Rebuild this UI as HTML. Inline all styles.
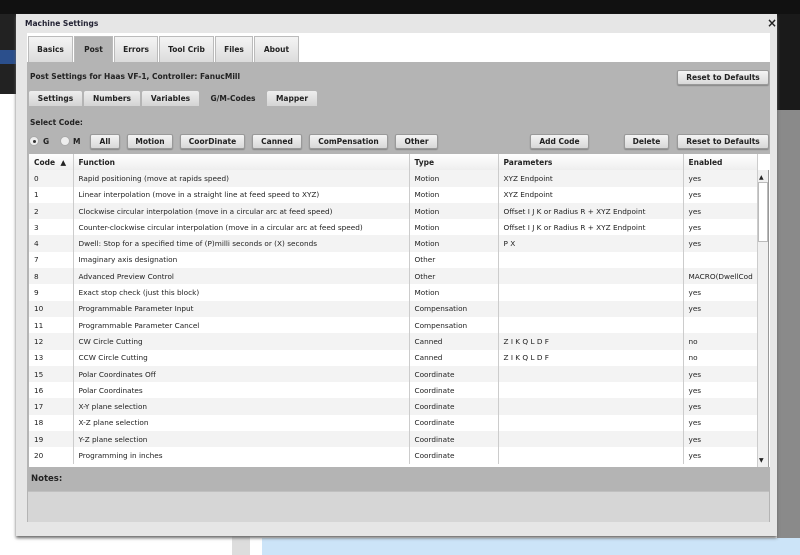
<!DOCTYPE html><html><head><style>
*{margin:0;padding:0;box-sizing:border-box}
body{width:800px;height:555px;overflow:hidden;position:relative;background:#fff;font-family:"DejaVu Sans","Liberation Sans",sans-serif;font-size:8px;color:#222}
.a{position:absolute}
.btn{position:absolute;height:15px;border:1px solid #999;border-radius:2px;background:linear-gradient(#f4f4f4,#d8d8d8);font-weight:bold;font-size:7.5px;text-align:center;line-height:13px;color:#222;box-shadow:0 1px 1px #888}
.tab{position:absolute;top:36px;height:26px;background:linear-gradient(#f4f4f4,#dcdcdc);border:1px solid #bbb;border-bottom:none;font-weight:bold;font-size:7.5px;text-align:center;line-height:26px}
.st{position:absolute;top:91px;height:15px;background:linear-gradient(#eee,#d4d4d4);font-weight:bold;font-size:7.5px;text-align:center;line-height:15px;border-radius:2px 2px 0 0}
table{border-collapse:collapse;width:728px;table-layout:fixed}
td{height:16.3px;font-size:7.3px;padding-left:5px;border-right:1px solid #ccc;white-space:nowrap;overflow:hidden}
tr:nth-child(even) td{background:#f3f3f3}
</style></head><body>
<div class="a" style="left:0;top:0;width:800px;height:14px;background:#111"></div>
<div class="a" style="left:0;top:14px;width:16px;height:80px;background:#222"></div>
<div class="a" style="left:0;top:50px;width:16px;height:14px;background:#2b4f8c"></div>
<div class="a" style="left:777px;top:14px;width:23px;height:96px;background:#1a1a1a"></div>
<div class="a" style="left:777px;top:110px;width:23px;height:430px;background:#8a8a8a"></div>
<div class="a" style="left:262px;top:538px;width:538px;height:17px;background:#cce4f8"></div>
<div class="a" style="left:232px;top:536px;width:18px;height:19px;background:#ddd"></div>
<div class="a" style="left:16px;top:14px;width:761px;height:522px;background:#e6e6e6;box-shadow:0 2px 3px #666"></div>
<div class="a" style="left:25px;top:19px;font-weight:bold;font-size:7.5px;color:#223">Machine Settings</div>
<div class="a" style="left:767px;top:16px;font-weight:bold;font-size:12px">×</div>
<div class="a" style="left:27px;top:33px;width:743px;height:29px;background:#fff"></div>
<div class="tab" style="left:28px;width:45px">Basics</div>
<div class="tab" style="left:74px;width:39px;background:#b4b4b4">Post</div>
<div class="tab" style="left:114px;width:44px">Errors</div>
<div class="tab" style="left:159px;width:55px">Tool Crib</div>
<div class="tab" style="left:215px;width:38px">Files</div>
<div class="tab" style="left:254px;width:45px">About</div>
<div class="a" style="left:27px;top:62px;width:743px;height:460px;background:#b4b4b4"></div>
<div class="a" style="left:30px;top:72px;font-weight:bold;font-size:7.5px">Post Settings for Haas VF-1, Controller: FanucMill</div>
<div class="btn" style="left:677px;top:70px;width:92px">Reset to Defaults</div>
<div class="st" style="left:29px;width:53px">Settings</div>
<div class="st" style="left:84px;width:56px">Numbers</div>
<div class="st" style="left:142px;width:57px">Variables</div>
<div class="st" style="left:201px;width:64px;background:#b4b4b4">G/M-Codes</div>
<div class="st" style="left:267px;width:50px">Mapper</div>
<div class="a" style="left:30px;top:118px;font-weight:bold;font-size:7.5px">Select Code:</div>
<div class="a" style="left:29px;top:136px;width:10px;height:10px;border-radius:50%;background:#eee;border:1px solid #aaa"></div>
<div class="a" style="left:32.5px;top:139.5px;width:3px;height:3px;border-radius:50%;background:#333"></div>
<div class="a" style="left:43px;top:137px;font-weight:bold;font-size:7.5px">G</div>
<div class="a" style="left:60px;top:136px;width:10px;height:10px;border-radius:50%;background:#eee;border:1px solid #aaa"></div>
<div class="a" style="left:73px;top:137px;font-weight:bold;font-size:7.5px">M</div>
<div class="btn" style="left:90px;top:134px;width:30px">All</div>
<div class="btn" style="left:127px;top:134px;width:46px">Motion</div>
<div class="btn" style="left:180px;top:134px;width:65px">CoorDinate</div>
<div class="btn" style="left:252px;top:134px;width:50px">Canned</div>
<div class="btn" style="left:309px;top:134px;width:79px">ComPensation</div>
<div class="btn" style="left:395px;top:134px;width:43px">Other</div>
<div class="btn" style="left:530px;top:134px;width:59px">Add Code</div>
<div class="btn" style="left:624px;top:134px;width:45px">Delete</div>
<div class="btn" style="left:677px;top:134px;width:92px">Reset to Defaults</div>
<div class="a" style="left:29px;top:154px;width:741px;height:313px;background:#fff;overflow:hidden">
<table><tr style="background:linear-gradient(#fff,#eee)"><td style="width:44px;font-weight:bold;font-size:7.5px">Code &nbsp;▲</td><td style="width:336px;font-weight:bold;font-size:7.5px">Function</td><td style="width:89px;font-weight:bold;font-size:7.5px">Type</td><td style="width:185px;font-weight:bold;font-size:7.5px">Parameters</td><td style="width:74px;font-weight:bold;font-size:7.5px">Enabled</td></tr>
<tr><td>0</td><td>Rapid positioning (move at rapids speed)</td><td>Motion</td><td>XYZ Endpoint</td><td>yes</td></tr>
<tr><td>1</td><td>Linear interpolation (move in a straight line at feed speed to XYZ)</td><td>Motion</td><td>XYZ Endpoint</td><td>yes</td></tr>
<tr><td>2</td><td>Clockwise circular interpolation (move in a circular arc at feed speed)</td><td>Motion</td><td>Offset I J K or Radius R + XYZ Endpoint</td><td>yes</td></tr>
<tr><td>3</td><td>Counter-clockwise circular interpolation (move in a circular arc at feed speed)</td><td>Motion</td><td>Offset I J K or Radius R + XYZ Endpoint</td><td>yes</td></tr>
<tr><td>4</td><td>Dwell: Stop for a specified time of (P)milli seconds or (X) seconds</td><td>Motion</td><td>P X</td><td>yes</td></tr>
<tr><td>7</td><td>Imaginary axis designation</td><td>Other</td><td></td><td></td></tr>
<tr><td>8</td><td>Advanced Preview Control</td><td>Other</td><td></td><td>MACRO(DwellCod</td></tr>
<tr><td>9</td><td>Exact stop check (just this block)</td><td>Motion</td><td></td><td>yes</td></tr>
<tr><td>10</td><td>Programmable Parameter Input</td><td>Compensation</td><td></td><td>yes</td></tr>
<tr><td>11</td><td>Programmable Parameter Cancel</td><td>Compensation</td><td></td><td></td></tr>
<tr><td>12</td><td>CW Circle Cutting</td><td>Canned</td><td>Z I K Q L D F</td><td>no</td></tr>
<tr><td>13</td><td>CCW Circle Cutting</td><td>Canned</td><td>Z I K Q L D F</td><td>no</td></tr>
<tr><td>15</td><td>Polar Coordinates Off</td><td>Coordinate</td><td></td><td>yes</td></tr>
<tr><td>16</td><td>Polar Coordinates</td><td>Coordinate</td><td></td><td>yes</td></tr>
<tr><td>17</td><td>X-Y plane selection</td><td>Coordinate</td><td></td><td>yes</td></tr>
<tr><td>18</td><td>X-Z plane selection</td><td>Coordinate</td><td></td><td>yes</td></tr>
<tr><td>19</td><td>Y-Z plane selection</td><td>Coordinate</td><td></td><td>yes</td></tr>
<tr><td>20</td><td>Programming in inches</td><td>Coordinate</td><td></td><td>yes</td></tr>
</table>
<div class="a" style="left:728px;top:16px;width:12px;height:297px;background:#f0f0f0;border-left:1px solid #ccc;border-right:1px solid #999"></div>
<div class="a" style="left:730px;top:20px;font-size:6px">▲</div>
<div class="a" style="left:730px;top:303px;font-size:6px">▼</div>
<div class="a" style="left:729px;top:28px;width:10px;height:60px;background:#fff;border:1px solid #bbb"></div>
</div>
<div class="a" style="left:31px;top:474px;font-weight:bold;font-size:8.5px">Notes:</div>
<div class="a" style="left:28px;top:491px;width:741px;height:31px;background:#d6d6d6;border-top:1px solid #c0c0c0"></div>
</body></html>
